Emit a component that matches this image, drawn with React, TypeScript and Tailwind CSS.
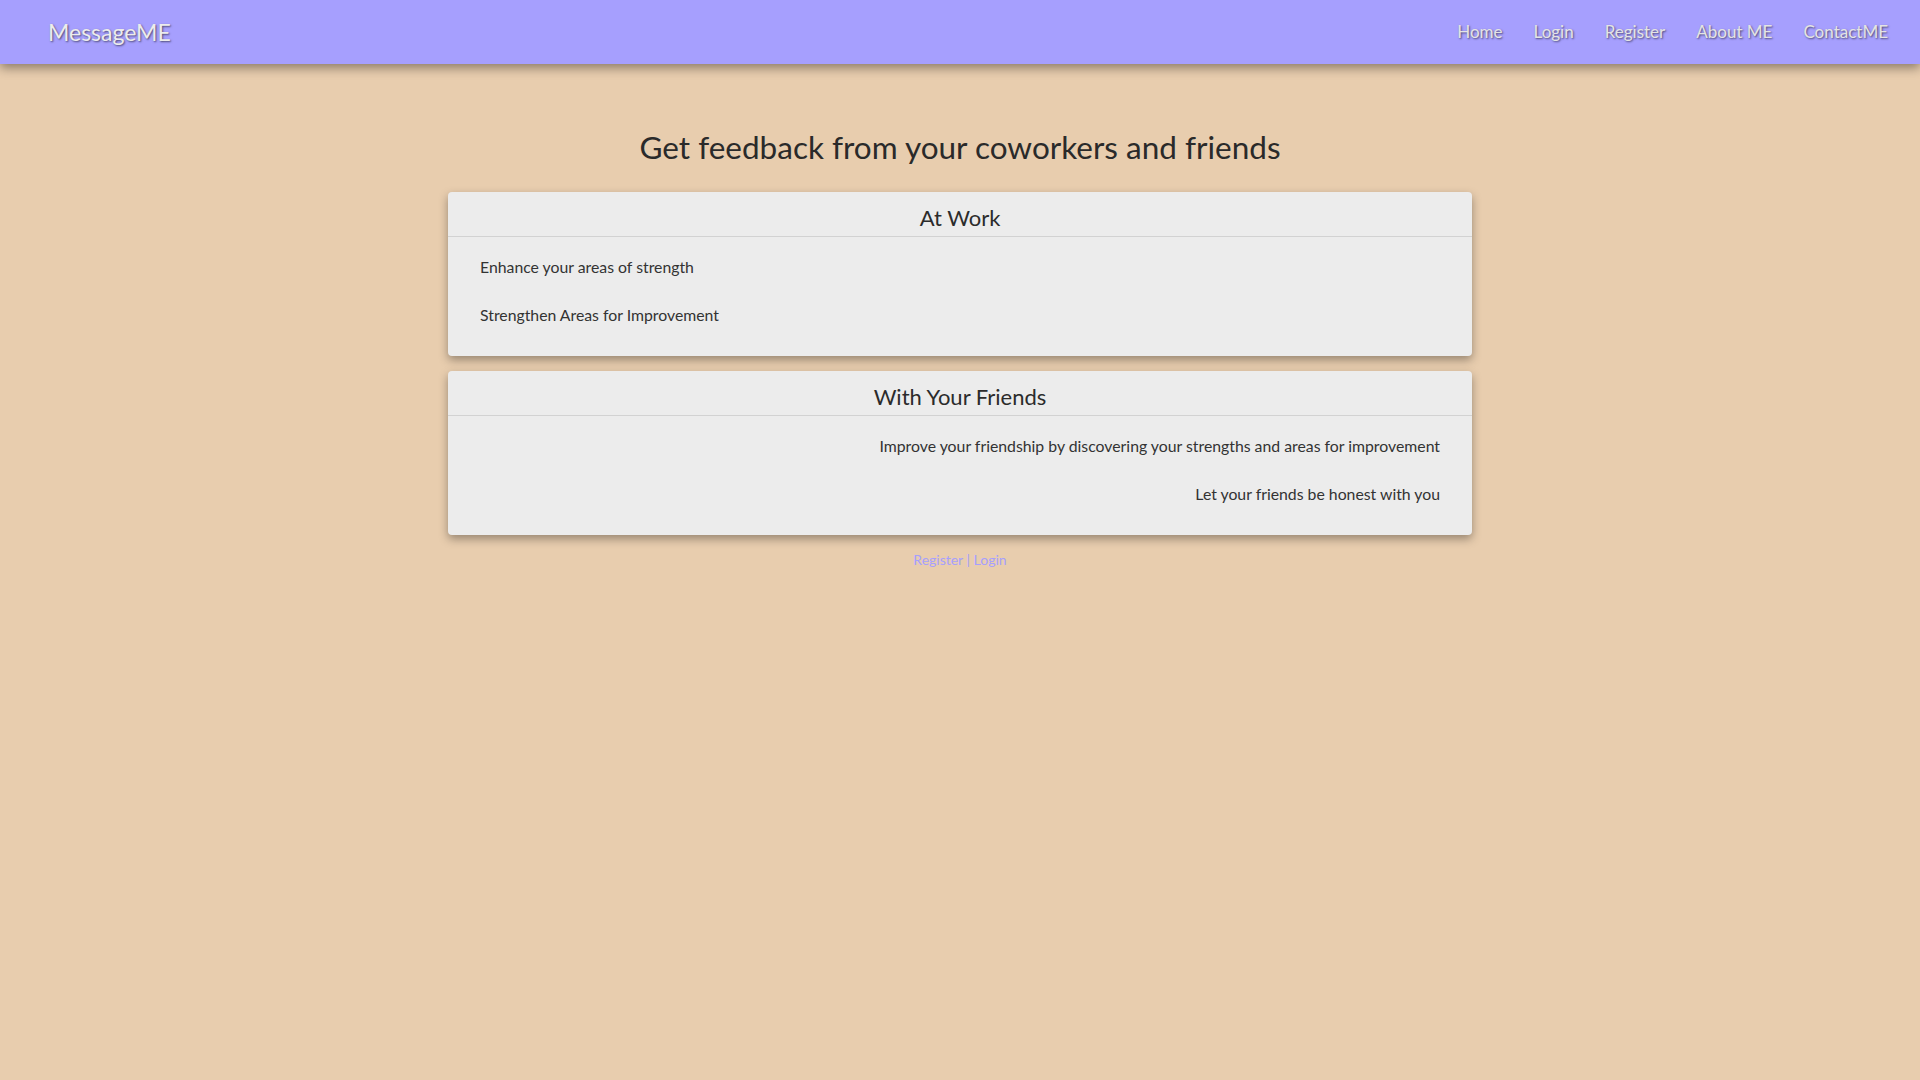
import React from "react";

const links = ["Home", "Login", "Register", "About ME", "ContactME"];

const Card = ({ title, lines, align }: { title: string; lines: string[]; align: "left" | "right" }) => (
  <div className="w-[1024px] bg-[#ececec] rounded-[4px] shadow-[0_4px_10px_rgba(0,0,0,0.35)]">
    <div className="h-[45px] flex items-center justify-center pt-[7px] border-b border-[#d2d2d2]">
      <h2 className="text-[22px] text-[#2b2b2b] leading-none">{title}</h2>
    </div>
    <div className={`px-8 pt-[18px] pb-[5px] ${align === "right" ? "text-right" : "text-left"}`}>
      {lines.map((l) => (
        <p key={l} className="text-[15.8px] leading-6 text-[#333] mb-6">{l}</p>
      ))}
    </div>
  </div>
);

const App = () => {
  return (
    <div className="min-h-[1080px] bg-[#e8cdae] font-['Lato',sans-serif]">
      <nav className="h-16 bg-[#a69ffe] shadow-[0_4px_10px_rgba(0,0,0,0.4)] flex items-center justify-between pl-12 pr-8">
        <a className="text-[23px] text-[#ececec] [text-shadow:1px_1px_2px_rgba(0,0,0,0.55)]">MessageME</a>
        <div className="flex items-center gap-[31px]">
          {links.map((l) => (
            <a key={l} className="text-[17px] text-[#e4e4e4] [text-shadow:1px_1px_2px_rgba(0,0,0,0.55)]">{l}</a>
          ))}
        </div>
      </nav>
      <main className="flex flex-col items-center">
        <h1 className="mt-[63px] text-[31.5px] leading-10 text-[#2a2a2a]">Get feedback from your coworkers and friends</h1>
        <div className="mt-[25px] flex flex-col gap-[15px]">
          <Card title="At Work" lines={["Enhance your areas of strength", "Strengthen Areas for Improvement"]} align="left" />
          <Card
            title="With Your Friends"
            lines={["Improve your friendship by discovering your strengths and areas for improvement", "Let your friends be honest with you"]}
            align="right"
          />
        </div>
        <p className="mt-[14px] text-[14px] text-[#a69ffe]">
          <a>Register</a> | <a>Login</a>
        </p>
      </main>
    </div>
  );
};

export default App;
